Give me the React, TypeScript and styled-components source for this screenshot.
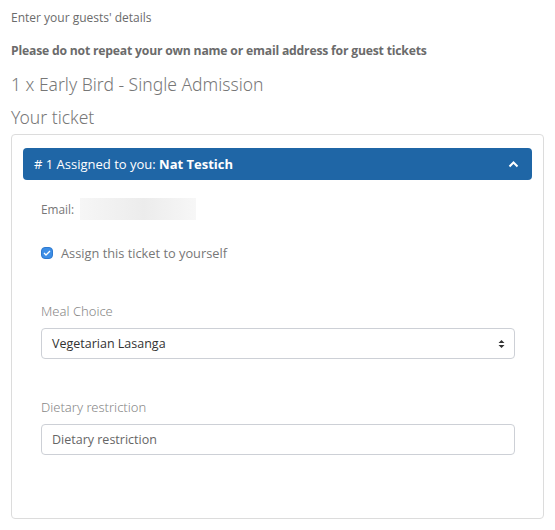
import React from "react";
import styled, { createGlobalStyle } from "styled-components";

const Global = createGlobalStyle`
  html, body { margin: 0; padding: 0; background: #fff; }
  body { font-family: "Open Sans", "Noto Sans", sans-serif; color: #666; }
  * { box-sizing: border-box; }
`;

const Page = styled.div`
  width: 555px;
  padding: 9px 11px 0 11px;
`;

const Intro = styled.p`
  margin: 0;
  font-size: 12px;
  line-height: 18px;
  color: #6b6b6b;
`;

const Warning = styled.p`
  margin: 15px 0 0;
  font-size: 12.2px;
  font-weight: 700;
  line-height: 18px;
  color: #6b6b6b;
  letter-spacing: -0.2px;
`;

const Heading = styled.h3<{ $gap: number }>`
  margin: ${(p) => p.$gap}px 0 0;
  font-family: "Noto Sans", "Open Sans", sans-serif;
  font-weight: 300;
  font-size: 17.5px;
  line-height: 24px;
  color: #777777;
`;

const Card = styled.section`
  margin-top: 5px;
  width: 533px;
  height: 385px;
  border: 1px solid #dcdcdc;
  border-radius: 4px;
  padding: 13px 11px 0 11px;
`;

const Header = styled.div`
  height: 32px;
  background: #1f66a6;
  border-radius: 4px;
  display: flex;
  align-items: center;
  justify-content: space-between;
  padding: 0 13px 0 11px;
  color: #fff;
  font-size: 13px;
`;

const Body = styled.div`
  padding: 18px 17px 0 18px;
  display: flex;
  flex-direction: column;
`;

const EmailRow = styled.div`
  display: flex;
  align-items: center;
  gap: 6px;
  font-size: 11.8px;
  color: #777;
`;

const Blur = styled.div`
  width: 116px;
  height: 22px;
  background: linear-gradient(90deg, #f6f6f6 0%, #ececec 55%, #f7f7f7 100%);
`;

const CheckRow = styled.label`
  margin-top: 24px;
  display: flex;
  align-items: center;
  gap: 8px;
  font-size: 12.8px;
  color: #777;
`;

const CheckBox = styled.span`
  width: 12px;
  height: 12px;
  border-radius: 4px;
  background: #3d8ee6;
  border: 1px solid #2f7ad0;
  display: flex;
  align-items: center;
  justify-content: center;
`;

const Field = styled.div<{ $top: number }>`
  margin-top: ${(p) => p.$top}px;
  display: flex;
  flex-direction: column;
  gap: 8px;
`;

const Label = styled.div`
  font-family: "Noto Sans", "Open Sans", sans-serif;
  font-weight: 300;
  font-size: 13px;
  line-height: 18px;
  color: #888;
`;

const Control = styled.div<{ $placeholder?: boolean }>`
  height: 31px;
  border: 1px solid #cdd0d6;
  border-radius: 4px;
  display: flex;
  align-items: center;
  justify-content: space-between;
  padding: 0 9px 0 10px;
  font-size: 12.5px;
  color: ${(p) => (p.$placeholder ? "#666" : "#333")};
`;

export default function App() {
  return (
    <>
      <Global />
      <Page>
        <Intro>Enter your guests' details</Intro>
        <Warning>Please do not repeat your own name or email address for guest tickets</Warning>
        <Heading $gap={12}>1 x Early Bird - Single Admission</Heading>
        <Heading $gap={9}>Your ticket</Heading>
        <Card>
          <Header>
            <span>
              # 1 Assigned to you: <b>Nat Testich</b>
            </span>
            <svg width="11" height="7" viewBox="0 0 11 7">
              <path d="M1.5 5.5 L5.5 1.5 L9.5 5.5" stroke="#fff" strokeWidth="2" fill="none" />
            </svg>
          </Header>
          <Body>
            <EmailRow>
              Email:
              <Blur />
            </EmailRow>
            <CheckRow>
              <CheckBox>
                <svg width="8" height="6" viewBox="0 0 8 6">
                  <path d="M1 3 L3 5 L7 1" stroke="#fff" strokeWidth="1.3" fill="none" />
                </svg>
              </CheckBox>
              Assign this ticket to yourself
            </CheckRow>
            <Field $top={40}>
              <Label>Meal Choice</Label>
              <Control>
                Vegetarian Lasanga
                <svg width="7" height="10" viewBox="0 0 7 10">
                  <path d="M0.5 4 L3.5 1 L6.5 4 Z M0.5 6 L3.5 9 L6.5 6 Z" fill="#333" />
                </svg>
              </Control>
            </Field>
            <Field $top={39}>
              <Label>Dietary restriction</Label>
              <Control $placeholder>Dietary restriction</Control>
            </Field>
          </Body>
        </Card>
      </Page>
    </>
  );
}
